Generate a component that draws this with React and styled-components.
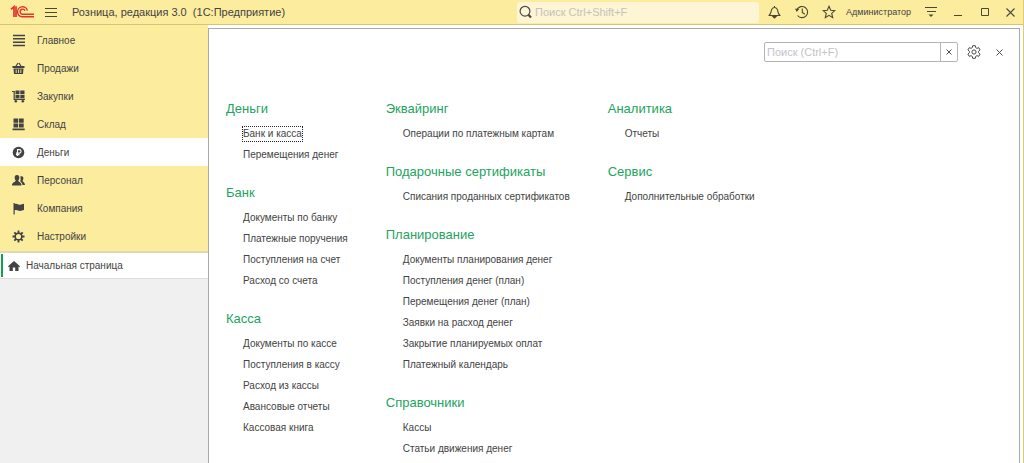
import React from 'react';
import styled, { createGlobalStyle } from 'styled-components';

const GlobalStyle = createGlobalStyle`
  * {
    box-sizing: border-box;
  }
  body {
    margin: 0;
    background: #fff;
    color: #434343;
    font-family: "Liberation Sans", Arial, sans-serif;
    font-size: 10px;
  }
  button, input {
    font: inherit;
    color: inherit;
    margin: 0;
  }
  a {
    color: inherit;
    text-decoration: none;
  }
`

const Window = styled.div`
  display: flex;
  flex-direction: column;
  min-height: 100vh;
  border-right: 1px solid #dccb7c;
`

const TopBar = styled.header`
  display: flex;
  align-items: center;
  height: 25px;
  padding-left: 10px;
  background: #fbec9e;
  border-bottom: 1px solid #d5c577;
`

const AppTitle = styled.h1`
  flex: 1;
  margin: 0 0 0 6px;
  font-size: 11px;
  font-weight: 400;
  white-space: pre;
`

const IconButton = styled.button`
  display: flex;
  align-items: center;
  justify-content: center;
  flex: none;
  width: ${props => props.$width || 27}px;
  height: 24px;
  padding: 0;
  border: 0;
  background: none;
`

const GlobalSearch = styled.label`
  display: flex;
  align-items: center;
  width: 242px;
  height: 21px;
  padding-left: 2px;
  margin-right: 2px;
  border-radius: 2px;
  background: #fdf5d3;
`

const GlobalSearchInput = styled.input`
  flex: 1;
  min-width: 0;
  padding: 0 3px;
  border: 0;
  outline: none;
  background: none;
  font-size: 11px;

  &::placeholder {
    color: #c5c3bd;
    opacity: 1;
  }
`

const UserLink = styled.a`
  margin: 0 6px 0 4px;
  font-size: 9px;
`

const Body = styled.div`
  display: flex;
  flex: 1;
`

const Sidebar = styled.aside`
  flex: none;
  width: 208px;
  background: #f0f0f0;
`

const Sections = styled.nav`
  padding: 1px 0;
  background: #fbec9e;
  border-bottom: 2px solid #dfd9b5;
`

const SectionLink = styled.a`
  display: flex;
  align-items: center;
  gap: 11px;
  height: 28px;
  padding-left: 12px;
  background: ${props => props.$active ? '#fff' : 'transparent'};
`

const HomeTab = styled.a`
  display: flex;
  align-items: center;
  gap: 6px;
  height: 26px;
  padding-left: 1px;
  background: #fff;
  border-bottom: 1px solid #dcdcdc;
`

const HomeMark = styled.span`
  width: 2px;
  height: 23px;
  margin-right: -1px;
  background: #14a04e;
`

const Panel = styled.main`
  flex: 1;
  min-width: 0;
  margin: 3px 3px 0 0;
  border: 1px solid #a9a9a9;
  border-bottom: 0;
`

const PanelTools = styled.div`
  display: flex;
  align-items: center;
  justify-content: flex-end;
  padding: 11px 8px 0 0;
`

const PanelSearch = styled.div`
  display: flex;
  width: 194px;
  height: 20px;
  margin-right: 2px;
  border: 1px solid #b4b4b4;
  border-radius: 2px;
`

const PanelSearchInput = styled.input`
  flex: 1;
  min-width: 0;
  padding: 0 2px;
  border: 0;
  outline: none;
  background: none;
  font-size: 11px;

  &::placeholder {
    color: #c4c4c8;
    opacity: 1;
  }
`

const ClearButton = styled.button`
  display: flex;
  align-items: center;
  justify-content: center;
  width: 17px;
  padding: 0;
  border: 0;
  border-left: 1px solid #b4b4b4;
  background: none;
`

const Columns = styled.div`
  display: flex;
  gap: 38px;
  padding: 34px 17px 0;
`

const Column = styled.div`
  display: flex;
  flex-direction: column;
  gap: 17px;
  white-space: nowrap;
`

const GroupTitle = styled.h2`
  margin: 0 0 4px;
  font-size: 13px;
  font-weight: 400;
  line-height: 21px;
  color: #22a45d;
`

const CommandList = styled.ul`
  margin: 0;
  padding: 0 0 0 17px;
  list-style: none;
`

const CommandItem = styled.li`
  display: flex;
  align-items: center;
  height: 21px;
`

const CommandLink = styled.a`
  line-height: 14px;
  outline: ${props => props.$focused ? '1px dotted #222' : 'none'};
`

const Logo = () => (
  <svg width="25" height="14" viewBox="0 0 25 14" fill="none" stroke="#e0342b">
    <path d="M1 4.4L4 1.8V12M6 1.2V12" strokeWidth="1.7" />
    <path d="M17.4 5.6A5 5 0 1 0 12.8 11.8H24" strokeWidth="1.5" />
    <path d="M15 5.8A2.5 2.5 0 1 0 12.8 9.2H24" strokeWidth="1.4" />
  </svg>
)

const MenuIcon = () => (
  <svg width="12" height="11" viewBox="0 0 12 11" stroke="#4a4736" shapeRendering="crispEdges">
    <path d="M0 1.5h12M0 5.5h12M0 9.5h12" />
  </svg>
)

const SearchIcon = () => (
  <svg width="13" height="14" viewBox="0 0 13 14" fill="none" stroke="#4a4a42">
    <circle cx="6" cy="6.2" r="4.9" strokeWidth="1.2" />
    <path d="M9.4 9.8l2.6 2.8" strokeWidth="2.2" />
  </svg>
)

const BellIcon = () => (
  <svg width="13" height="14" viewBox="0 0 13 14" fill="none" stroke="#4a4736" strokeWidth="1.1">
    <path d="M1 10.5C3.4 8.5 3 6.8 3.5 4.8C4 3 5 2.5 6.5 2.5S9 3 9.5 4.8C10 6.8 9.6 8.5 12 10.5Z" strokeLinejoin="round" />
    <path d="M6.5 1v1.5" />
    <path d="M5 11.6h3l-1.5 1.4z" fill="#4a4736" />
  </svg>
)

const HistoryIcon = () => (
  <svg width="14" height="14" viewBox="0 0 14 14" fill="none" stroke="#4a4736" strokeWidth="1.1">
    <path d="M2 4.6A5.6 5.6 0 1 1 2.6 10.5" />
    <path d="M7.3 3.5V7.5L9.8 9.3" />
    <path d="M0 3.8h4.4L1.8 7z" fill="#4a4736" stroke="none" />
  </svg>
)

const StarIcon = () => (
  <svg width="14" height="14" viewBox="0 0 14 14" fill="none" stroke="#4a4736" strokeWidth="1.1">
    <path d="M7 1.3l1.7 3.9 4.2.4-3.2 2.8 1 4.2L7 10.4l-3.7 2.2 1-4.2L1.1 5.6l4.2-.4z" />
  </svg>
)

const OptionsIcon = () => (
  <svg width="12" height="12" viewBox="0 0 12 12" stroke="#4a4736">
    <path d="M0 1.5h12M1.5 5.5h9" shapeRendering="crispEdges" />
    <path d="M3.5 8.5h5L6 11z" fill="#4a4736" stroke="none" />
  </svg>
)

const MinimizeIcon = () => (
  <svg width="8" height="8" viewBox="0 0 8 8" stroke="#4a4736">
    <path d="M0 7.5h8" />
  </svg>
)

const MaximizeIcon = () => (
  <svg width="8" height="8" viewBox="0 0 8 8" fill="none" stroke="#4a4736">
    <path d="M.5.5h7v7h-7z" />
  </svg>
)

const CrossIcon = ({ size = 9, width = 1.1 }) => (
  <svg width={size} height={size} viewBox={`0 0 ${size} ${size}`} stroke="#4a4a4a" strokeWidth={width}>
    <path d={`M.5.5L${size - 0.5} ${size - 0.5}M${size - 0.5}.5L.5 ${size - 0.5}`} />
  </svg>
)

const GearOutlineIcon = () => (
  <svg width="14" height="14" viewBox="0 0 14 14" fill="none" stroke="#4a4a4a" strokeLinejoin="round">
    <path d="M5.7.7h2.6l.4 1.9 1.2.7 1.9-.6 1.3 2.2-1.5 1.4v1.4l1.5 1.4-1.3 2.2-1.9-.6-1.2.7-.4 1.9H5.7l-.4-1.9-1.2-.7-1.9.6L.9 9.1l1.5-1.4V6.3L.9 4.9l1.3-2.2 1.9.6 1.2-.7z" />
    <circle cx="7" cy="7" r="2.1" />
  </svg>
)

const sectionIcons = {
  main: <path d="M1 1.5h12M1 4.8h12M1 8.2h12M1 11.5h12" stroke="#434343" strokeWidth="1.6" />,
  basket: (
    <>
      <path d="M3.5 5L6 1M9.5 5L7 1" stroke="#434343" strokeWidth="1.2" />
      <path d="M.5 4h12v2H.5zM1.5 6.5h10L11 12H2z" />
      <path d="M4.2 7.5V11M6.5 7.5V11M8.8 7.5V11" stroke="#fbec9e" strokeWidth=".9" />
    </>
  ),
  cart: (
    <>
      <path d="M0 1.5h2.2v7.8H13" stroke="#434343" fill="none" strokeWidth="1.2" />
      <path d="M3.5.5h4v3.700h-4zM8.300.5h4.200v3.700H8.300zM3.500 4.900h4v3.400h-4zM8.300 4.900h4.200v3.400H8.300z" />
      <circle cx="3.8" cy="11.3" r="1.3" />
      <circle cx="10.8" cy="11.3" r="1.3" />
    </>
  ),
  stock: <path d="M1.5.5h4.700v4.300H1.500zM7 .5h4.700v4.300H7zM1.500 5.600h4.700v4H1.500zM7 5.600h4.700v4H7zM.5 10.500h12.200V12.200H.5z" />,
  money: (
    <>
      <circle cx="6.500" cy="6.500" r="5.800" />
      <path d="M5.500 10V3.600h1.800a1.700 1.700 0 0 1 0 3.500H4M4 8.600h3.500" stroke="#fff" strokeWidth="1.1" fill="none" />
    </>
  ),
  people: (
    <>
      <path d="M5 1C6.7 1 7.5 2.2 7.3 4C7.2 5.3 6.7 6 6.3 6.6C6.4 8.2 9.5 8.3 9.5 11.5H0C0 8.3 3.6 8.2 3.7 6.6C3.2 6 2.8 5.3 2.7 4C2.5 2.2 3.3 1 5 1Z" />
      <path d="M8.3 2.5C10.6 1.6 11.8 3 11.3 5C11.2 5.8 10.8 6.3 10.6 6.7C10.7 8 13 8.3 13 11H10.5C10.2 9 9.2 8.3 8.3 7.6C8.4 6.4 9 5 8.3 2.5Z" />
    </>
  ),
  flag: <path d="M1.5 1h1.2v1C5 .8 6.2 2.9 8 2.7 9.5 2.6 10.5 2 12 1.7V8c-1.5.4-2.5.9-4 1C6.2 9 5 7.3 2.7 8.3V12.5H1.5z" />,
  gear: (
    <>
      <circle cx="6.5" cy="6.5" r="3.3" fill="none" stroke="#434343" strokeWidth="1.5" />
      <path d="M6.5.5v2.5M6.5 10v2.5M.5 6.5H3M10 6.5h2.5M2.3 2.3L4 4M9 9l1.7 1.7M2.3 10.7L4 9M9 4l1.7-1.7" stroke="#434343" strokeWidth="1.8" />
    </>
  ),
}

const SectionIcon = ({ name }) => (
  <svg width="14" height="13" viewBox="0 0 14 13" fill="#434343">
    {sectionIcons[name]}
  </svg>
)

const HomeIcon = () => (
  <svg width="12" height="12" viewBox="0 0 12 12" fill="#434343">
    <path d="M6 1l6 5.3-.8.9-.7-.6V11H7.2V7.5H4.800V11H1.500V6.600L.8 7.200 0 6.300z" />
  </svg>
)

const sections = [
  ['main', 'Главное'],
  ['basket', 'Продажи'],
  ['cart', 'Закупки'],
  ['stock', 'Склад'],
  ['money', 'Деньги'],
  ['people', 'Персонал'],
  ['flag', 'Компания'],
  ['gear', 'Настройки'],
]

const columns = [
  [
    { title: 'Деньги', items: ['Банк и касса', 'Перемещения денег'] },
    { title: 'Банк', items: ['Документы по банку', 'Платежные поручения', 'Поступления на счет', 'Расход со счета'] },
    { title: 'Касса', items: ['Документы по кассе', 'Поступления в кассу', 'Расход из кассы', 'Авансовые отчеты', 'Кассовая книга'] },
  ],
  [
    { title: 'Эквайринг', items: ['Операции по платежным картам'] },
    { title: 'Подарочные сертификаты', items: ['Списания проданных сертификатов'] },
    {
      title: 'Планирование',
      items: [
        'Документы планирования денег',
        'Поступления денег (план)',
        'Перемещения денег (план)',
        'Заявки на расход денег',
        'Закрытие планируемых оплат',
        'Платежный календарь',
      ],
    },
    { title: 'Справочники', items: ['Кассы', 'Статьи движения денег'] },
  ],
  [
    { title: 'Аналитика', items: ['Отчеты'] },
    { title: 'Сервис', items: ['Дополнительные обработки'] },
  ],
]

const focusedItem = 'Банк и касса'

const Group = ({ title, items }) => (
  <section>
    <GroupTitle>{title}</GroupTitle>
    <CommandList>
      {items.map((item) => (
        <CommandItem key={item}>
          <CommandLink href="#" $focused={item === focusedItem}>{item}</CommandLink>
        </CommandItem>
      ))}
    </CommandList>
  </section>
)

const App = () => (
  <>
    <GlobalStyle />
    <Window>
      <TopBar>
        <Logo />
        <IconButton type="button" $width={31} aria-label="Меню"><MenuIcon /></IconButton>
        <AppTitle>{'Розница, редакция 3.0  (1С:Предприятие)'}</AppTitle>
        <GlobalSearch>
          <SearchIcon />
          <GlobalSearchInput type="text" aria-label="Поиск" placeholder="Поиск Ctrl+Shift+F" />
        </GlobalSearch>
        <IconButton type="button" aria-label="Уведомления"><BellIcon /></IconButton>
        <IconButton type="button" aria-label="История"><HistoryIcon /></IconButton>
        <IconButton type="button" aria-label="Избранное"><StarIcon /></IconButton>
        <UserLink href="#">Администратор</UserLink>
        <IconButton type="button" aria-label="Настройки"><OptionsIcon /></IconButton>
        <IconButton type="button" aria-label="Свернуть"><MinimizeIcon /></IconButton>
        <IconButton type="button" aria-label="Развернуть"><MaximizeIcon /></IconButton>
        <IconButton type="button" $width={25} aria-label="Закрыть"><CrossIcon /></IconButton>
      </TopBar>
      <Body>
        <Sidebar>
          <Sections>
            {sections.map(([icon, label]) => (
              <SectionLink key={icon} href="#" $active={icon === 'money'}>
                <SectionIcon name={icon} />
                {label}
              </SectionLink>
            ))}
          </Sections>
          <HomeTab href="#">
            <HomeMark />
            <HomeIcon />
            Начальная страница
          </HomeTab>
        </Sidebar>
        <Panel>
          <PanelTools>
            <PanelSearch>
              <PanelSearchInput type="text" aria-label="Поиск" placeholder="Поиск (Ctrl+F)" />
              <ClearButton type="button" aria-label="Очистить"><CrossIcon size={6} width={1} /></ClearButton>
            </PanelSearch>
            <IconButton type="button" aria-label="Настройка"><GearOutlineIcon /></IconButton>
            <IconButton type="button" $width={24} aria-label="Закрыть"><CrossIcon size={7} width={1} /></IconButton>
          </PanelTools>
          <Columns>
            {columns.map((groups) => (
              <Column key={groups[0].title}>
                {groups.map((group) => (
                  <Group key={group.title} {...group} />
                ))}
              </Column>
            ))}
          </Columns>
        </Panel>
      </Body>
    </Window>
  </>
);

export default App;
